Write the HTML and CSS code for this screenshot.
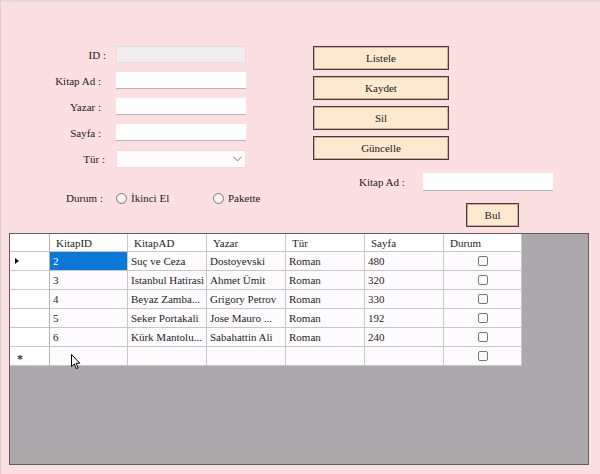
FILE: index.html
```html
<!DOCTYPE html>
<html lang="tr">
<head>
<meta charset="utf-8">
<title>Kitap Formu</title>
<link rel="stylesheet" href="styles.css">
</head>
<body>
<div class="window">
  <div class="topbar"></div>
  <div class="upper">
    <div class="left">
      <div class="form">
        <span class="lbl lbl-id">ID :</span><div class="tb tb-disabled"></div>
        <span class="lbl">Kitap Ad :</span><div class="tb"></div>
        <span class="lbl">Yazar :</span><div class="tb"></div>
        <span class="lbl">Sayfa :</span><div class="tb"></div>
        <span class="lbl lbl-tur">Tür :</span>
        <div class="tb combo">
          <svg class="chev" width="9" height="6" viewBox="0 0 9 6"><polyline points="0.5,0.8 4.5,4.8 8.5,0.8" fill="none" stroke="#777" stroke-width="1"/></svg>
        </div>
      </div>
      <div class="durum">
        <span class="durum-lbl">Durum :</span>
        <span class="opt opt-1"><span class="radio"></span>İkinci El</span>
        <span class="opt"><span class="radio"></span>Pakette</span>
      </div>
    </div>
    <div class="right">
      <div class="buttons">
        <button class="btn">Listele</button>
        <button class="btn">Kaydet</button>
        <button class="btn">Sil</button>
        <button class="btn">Güncelle</button>
      </div>
      <div class="search">
        <span class="search-lbl">Kitap Ad :</span>
        <div class="tb tb-search"></div>
      </div>
      <button class="btn btn-bul">Bul</button>
    </div>
  </div>
  <div class="grid">
    <div class="table">
      <div class="row head">
        <div class="c rh"></div>
        <div class="c">KitapID</div>
        <div class="c">KitapAD</div>
        <div class="c">Yazar</div>
        <div class="c">Tür</div>
        <div class="c">Sayfa</div>
        <div class="c">Durum</div>
      </div>
      <div class="row">
        <div class="c rh"><span class="tri"></span></div>
        <div class="c sel">2</div>
        <div class="c">Suç ve Ceza</div>
        <div class="c">Dostoyevski</div>
        <div class="c">Roman</div>
        <div class="c">480</div>
        <div class="c chk"><span class="box"></span></div>
      </div>
      <div class="row">
        <div class="c rh"></div>
        <div class="c">3</div>
        <div class="c">Istanbul Hatirasi</div>
        <div class="c">Ahmet Ümit</div>
        <div class="c">Roman</div>
        <div class="c">320</div>
        <div class="c chk"><span class="box"></span></div>
      </div>
      <div class="row">
        <div class="c rh"></div>
        <div class="c">4</div>
        <div class="c">Beyaz Zamba...</div>
        <div class="c">Grigory Petrov</div>
        <div class="c">Roman</div>
        <div class="c">330</div>
        <div class="c chk"><span class="box"></span></div>
      </div>
      <div class="row">
        <div class="c rh"></div>
        <div class="c">5</div>
        <div class="c">Seker Portakali</div>
        <div class="c">Jose Mauro ...</div>
        <div class="c">Roman</div>
        <div class="c">192</div>
        <div class="c chk"><span class="box"></span></div>
      </div>
      <div class="row">
        <div class="c rh"></div>
        <div class="c">6</div>
        <div class="c">Kürk Mantolu...</div>
        <div class="c">Sabahattin Ali</div>
        <div class="c">Roman</div>
        <div class="c">240</div>
        <div class="c chk"><span class="box"></span></div>
      </div>
      <div class="row">
        <div class="c rh star">*</div>
        <div class="c"></div>
        <div class="c"></div>
        <div class="c"></div>
        <div class="c"></div>
        <div class="c"></div>
        <div class="c chk"><span class="box"></span></div>
      </div>
    </div>
  </div>
  <svg class="cursor" width="10" height="16" viewBox="0 0 10 16"><path d="M0.5 0.5 L0.5 12.5 L3.3 9.9 L5.3 14.6 L7.1 13.8 L5.1 9.2 L8.8 9.2 Z" fill="#fff" stroke="#000" stroke-width="1" stroke-linejoin="miter"/></svg>
</div>
</body>
</html>
```
FILE: styles.css
```css
* { box-sizing: border-box; }
html, body { margin: 0; padding: 0; }
body {
  width: 600px;
  height: 474px;
  overflow: hidden;
  background: #fcdfe0;
  font-family: "Liberation Serif", "Times New Roman", serif;
  font-size: 11px;
  color: #1c1c1c;
}
.window {
  position: relative;
  width: 600px;
  height: 474px;
  border-left: 1px solid #ddcfcf;
}
.topbar {
  height: 2px;
  background: #e3d9d9;
}
.upper {
  display: flex;
  align-items: flex-start;
}
.left {
  width: 312px;
  padding-top: 44px;
}
.form {
  display: grid;
  grid-template-columns: 100px 130px;
  grid-auto-rows: 17px;
  column-gap: 15px;
  row-gap: 9px;
}
.lbl {
  justify-self: end;
  align-self: center;
  white-space: nowrap;
}
.lbl-id { margin-right: -5px; }
.lbl-tur { margin-right: -4px; }
.tb {
  background: #fff;
  border-bottom: 1px solid #b9b3b3;
  height: 17px;
}
.tb-disabled {
  background: #efeded;
  border: 1px dotted #d8d2d2;
}
.combo {
  position: relative;
  border: 1px solid #e6e0e0;
  background: #fdfbfb;
  display: flex;
  align-items: center;
  justify-content: flex-end;
  padding-right: 3px;
  height: 18px;
}
.chev { display: block; }
.durum {
  display: flex;
  align-items: center;
  height: 16px;
  margin-top: 23px;
}
.durum-lbl {
  width: 102px;
  text-align: right;
}
.opt {
  display: flex;
  align-items: center;
  gap: 4px;
}
.opt-1 {
  margin-left: 13px;
  width: 97px;
}
.radio {
  width: 11px;
  height: 11px;
  border-radius: 50%;
  border: 1px solid #7a7a7a;
  background: radial-gradient(circle at 50% 40%, #ffffff, #e6e6e6);
}
.right {
  padding-top: 44px;
  display: flex;
  flex-direction: column;
  align-items: flex-start;
}
.buttons {
  display: flex;
  flex-direction: column;
  gap: 6px;
}
.btn {
  width: 136px;
  height: 24px;
  background: #fde8d0;
  border: 1px solid #4a3a3a;
  box-shadow: inset 0 0 0 1px rgba(90, 70, 70, 0.35);
  font-family: inherit;
  font-size: 11px;
  color: #1c1c1c;
  padding: 0;
  margin: 0;
}
.search {
  display: flex;
  align-items: center;
  margin-top: 13px;
  height: 18px;
  padding-left: 46px;
}
.search-lbl {
  width: 64px;
  white-space: nowrap;
}
.tb-search {
  width: 130px;
  height: 18px;
}
.btn-bul {
  width: 53px;
  margin-top: 12px;
  margin-left: 153px;
}
.grid {
  margin-top: 6px;
  margin-left: 8px;
  width: 580px;
  height: 232px;
  border: 1px solid #5e5e5e;
  background: #aba9ab;
}
.table {
  width: 512px;
  background: #fdfbfd;
}
.row {
  display: grid;
  grid-template-columns: 40px 78px 79px 79px 79px 79px 78px;
  height: 19px;
}
.row.head {
  height: 18px;
  background: #fff;
}
.c {
  border-right: 1px solid #c8c6c8;
  border-bottom: 1px solid #c8c6c8;
  padding-left: 3px;
  display: flex;
  align-items: center;
  white-space: nowrap;
  overflow: hidden;
  color: #1e1e1e;
}
.head .c {
  padding-left: 6px;
}
.rh {
  background: #fff;
  border-right-color: #b4b2b4;
  padding-left: 5px;
}
.head .rh { padding-left: 0; }
.tri {
  width: 0;
  height: 0;
  border-top: 3.5px solid transparent;
  border-bottom: 3.5px solid transparent;
  border-left: 4px solid #111;
}
.star {
  padding-left: 7px;
  padding-top: 6px;
  font-size: 12px;
  font-weight: bold;
  color: #333;
}
.sel {
  background: #0a78d6;
  color: #fff;
}
.chk {
  justify-content: center;
  padding-left: 0;
}
.box {
  width: 10px;
  height: 10px;
  border: 1px solid #777;
  border-radius: 2px;
  background: #fbfbfb;
}
.cursor {
  position: absolute;
  left: 70px;
  top: 354px;
}
```
